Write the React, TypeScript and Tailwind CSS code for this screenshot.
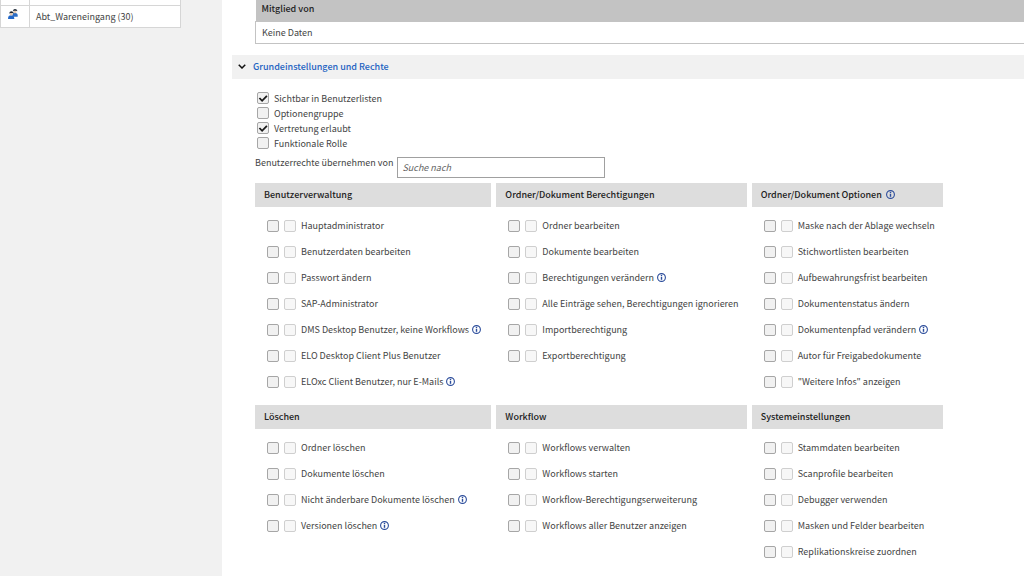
import { useState } from "react";

type Right = {
  label: string;
  info?: boolean;
};

type RightsGroup = {
  title: string;
  info?: boolean;
  rights: Right[];
};

const basicSettings = [
  { label: "Sichtbar in Benutzerlisten", checked: true },
  { label: "Optionengruppe", checked: false },
  { label: "Vertretung erlaubt", checked: true },
  { label: "Funktionale Rolle", checked: false },
];

const rightsGroups: RightsGroup[] = [
  {
    title: "Benutzerverwaltung",
    rights: [
      { label: "Hauptadministrator" },
      { label: "Benutzerdaten bearbeiten" },
      { label: "Passwort ändern" },
      { label: "SAP-Administrator" },
      { label: "DMS Desktop Benutzer, keine Workflows", info: true },
      { label: "ELO Desktop Client Plus Benutzer" },
      { label: "ELOxc Client Benutzer, nur E-Mails", info: true },
    ],
  },
  {
    title: "Ordner/Dokument Berechtigungen",
    rights: [
      { label: "Ordner bearbeiten" },
      { label: "Dokumente bearbeiten" },
      { label: "Berechtigungen verändern", info: true },
      { label: "Alle Einträge sehen, Berechtigungen ignorieren" },
      { label: "Importberechtigung" },
      { label: "Exportberechtigung" },
    ],
  },
  {
    title: "Ordner/Dokument Optionen",
    info: true,
    rights: [
      { label: "Maske nach der Ablage wechseln" },
      { label: "Stichwortlisten bearbeiten" },
      { label: "Aufbewahrungsfrist bearbeiten" },
      { label: "Dokumentenstatus ändern" },
      { label: "Dokumentenpfad verändern", info: true },
      { label: "Autor für Freigabedokumente" },
      { label: '"Weitere Infos" anzeigen' },
    ],
  },
  {
    title: "Löschen",
    rights: [
      { label: "Ordner löschen" },
      { label: "Dokumente löschen" },
      { label: "Nicht änderbare Dokumente löschen", info: true },
      { label: "Versionen löschen", info: true },
    ],
  },
  {
    title: "Workflow",
    rights: [
      { label: "Workflows verwalten" },
      { label: "Workflows starten" },
      { label: "Workflow-Berechtigungserweiterung" },
      { label: "Workflows aller Benutzer anzeigen" },
    ],
  },
  {
    title: "Systemeinstellungen",
    rights: [
      { label: "Stammdaten bearbeiten" },
      { label: "Scanprofile bearbeiten" },
      { label: "Debugger verwenden" },
      { label: "Masken und Felder bearbeiten" },
      { label: "Replikationskreise zuordnen" },
    ],
  },
];

function InfoIcon() {
  return (
    <svg viewBox="0 0 18 18" className="size-[9px] shrink-0" fill="none" aria-hidden="true">
      <circle cx="9" cy="9" r="7.8" stroke="#2b4c9b" strokeWidth="2.2" />
      <path d="M9 7.6v6" stroke="#2b4c9b" strokeWidth="2.8" />
      <path d="M9 3.8v2.4" stroke="#2b4c9b" strokeWidth="2.8" />
    </svg>
  );
}

function GroupIcon() {
  return (
    <svg viewBox="0 0 30 30" className="size-[10px]" aria-hidden="true">
      <path d="M13 20c0-6 2-8 7-8s9 1 9 7v4H13z" fill="#2f6fc4" />
      <circle cx="21" cy="8" r="4.5" fill="#e9c9ae" />
      <path d="M15 7c0-5 3-7 6-7s7 2 7 7l-3-2h-7z" fill="#1d2733" />
      <path d="M0 30c0-8 3-11 9-11s10 3 10 11z" fill="#2468c8" />
      <circle cx="10" cy="15" r="4.5" fill="#e9c9ae" />
      <path d="M4 14c0-5 3-7 6-7s7 2 7 7l-3-2H7z" fill="#1d2733" />
    </svg>
  );
}

function Checkbox({
  id,
  label,
  defaultChecked,
  disabled,
}: {
  id?: string;
  label?: string;
  defaultChecked?: boolean;
  disabled?: boolean;
}) {
  return (
    <span className="relative block size-3 shrink-0">
      <input
        type="checkbox"
        id={id}
        aria-label={label}
        defaultChecked={defaultChecked}
        disabled={disabled}
        className="peer block size-3 appearance-none rounded-[2px] border border-[#a6a6a6] bg-[#f1f1f1] disabled:border-[#cfcfcf] disabled:bg-[#f7f7f7]"
      />
      <svg
        viewBox="0 0 12 12"
        fill="none"
        className="pointer-events-none absolute inset-0 hidden size-3 peer-checked:block"
        aria-hidden="true"
      >
        <path d="M2.4 6l2.7 2.8 4.8-5" stroke="#1a1a1a" strokeWidth="1.8" />
      </svg>
    </span>
  );
}

function RightsPanel({ group }: { group: RightsGroup }) {
  return (
    <section>
      <h3 className="flex h-6 items-center gap-1 bg-[#dddddd] px-[9px] font-medium whitespace-nowrap text-[#222222]">
        {group.title}
        {group.info && <InfoIcon />}
      </h3>
      <ul className="pt-1.5 pb-2.5 pl-3">
        {group.rights.map((right) => {
          const id = `${group.title}-${right.label}`.replace(/[^\p{L}]+/gu, "-");
          return (
            <li key={right.label} className="flex h-[26px] items-center gap-[5px] whitespace-nowrap">
              <Checkbox id={id} />
              <Checkbox label={right.label} disabled />
              <span className="flex items-center gap-[3px]">
                <label htmlFor={id}>{right.label}</label>
                {right.info && <InfoIcon />}
              </span>
            </li>
          );
        })}
      </ul>
    </section>
  );
}

export default function App() {
  const [open, setOpen] = useState(true);

  return (
    <div className="flex min-h-screen bg-white font-['Noto_Sans_CJK_SC',sans-serif] text-[9px] leading-[15px] text-[#444444]">
      {/* Group list */}
      <aside className="w-[222px] shrink-0 bg-[#f1f1f1] pr-[41px]">
        <table className="w-full border-collapse bg-white">
          <tbody>
            <tr className="h-[5px]">
              <td className="w-[29px] border border-t-0 border-[#d6d6d6]" />
              <td className="border border-t-0 border-[#d6d6d6]" />
            </tr>
            <tr className="h-[22px]">
              <td className="border border-[#d6d6d6] pb-1 pl-[7px]">
                <GroupIcon />
              </td>
              <td className="border border-[#d6d6d6] px-1.5">Abt_Wareneingang (30)</td>
            </tr>
          </tbody>
        </table>
      </aside>

      <main className="min-w-0 flex-1 overflow-hidden pl-[10px]">
        <div className="pl-[23px]">
          <table className="w-full border-collapse text-left">
            <thead>
              <tr className="h-[21px] bg-[#c3c3c3] text-[#222222]">
                <th className="px-1.5 pb-1 font-medium">Mitglied von</th>
              </tr>
            </thead>
            <tbody>
              <tr className="h-[22px]">
                <td className="border border-r-0 border-[#c3c3c3] px-1.5">Keine Daten</td>
              </tr>
            </tbody>
          </table>
        </div>

        <h2 className="mt-[11px] bg-[#f1f1f1]">
          <button
            type="button"
            aria-expanded={open}
            onClick={() => setOpen(!open)}
            className="flex h-6 w-full items-center gap-[7px] px-1.5 font-medium text-[#2463c2]"
          >
            <svg viewBox="0 0 16 10" className={open ? "w-2" : "w-2 -rotate-90"} fill="none" aria-hidden="true">
              <path d="M1.5 1.5L8 8l6.5-6.5" stroke="#111111" strokeWidth="3" />
            </svg>
            Grundeinstellungen und Rechte
          </button>
        </h2>

        {open && (
          <div className="pt-3 pl-[23px]">
            <ul className="pl-[2px]">
              {basicSettings.map((setting) => {
                const id = setting.label.replace(/ /g, "-");
                return (
                  <li key={setting.label} className="flex h-[15px] items-center gap-[5px]">
                    <Checkbox id={id} defaultChecked={setting.checked} />
                    <label htmlFor={id}>{setting.label}</label>
                  </li>
                );
              })}
            </ul>

            <div className="mt-1 flex items-start gap-1">
              <label htmlFor="inherit-rights">Benutzerrechte übernehmen von</label>
              <input
                id="inherit-rights"
                type="text"
                placeholder="Suche nach"
                className="mt-[2px] h-[21px] w-[208px] border border-[#a0a0a0] px-1 placeholder:text-[#666666] placeholder:italic"
              />
            </div>

            {/* Rights, three groups per row */}
            <div className="mt-[5px] grid max-w-[688px] grid-cols-[minmax(0,236fr)_minmax(0,250fr)_minmax(0,191fr)] gap-x-[5px]">
              {rightsGroups.map((group) => (
                <RightsPanel key={group.title} group={group} />
              ))}
            </div>
          </div>
        )}
      </main>
    </div>
  );
}
